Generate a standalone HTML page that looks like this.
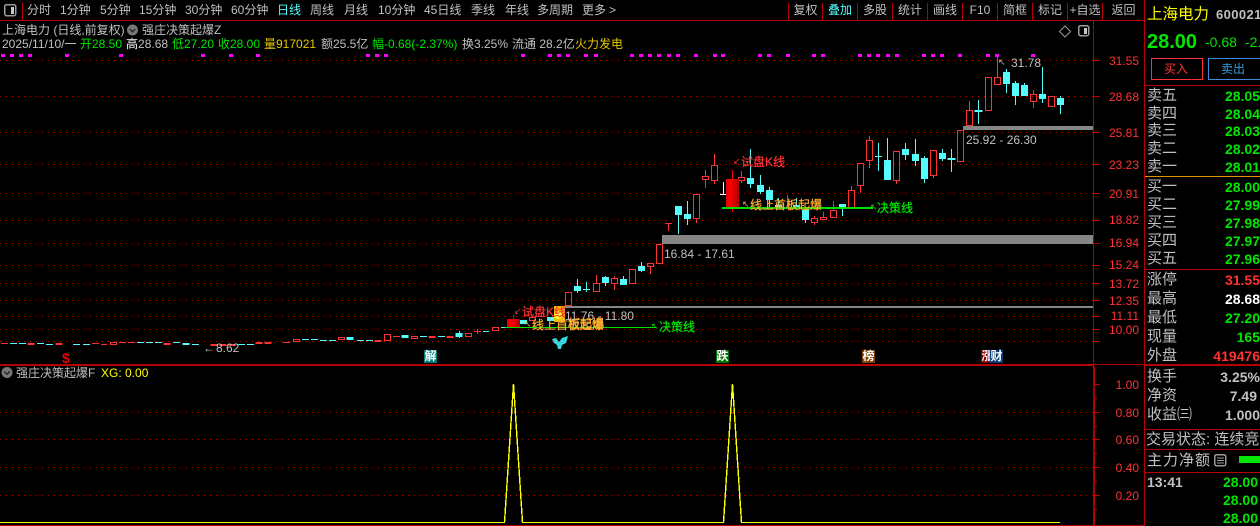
<!DOCTYPE html>
<html lang="zh"><head><meta charset="utf-8"><title>上海电力</title>
<style>
html,body{margin:0;padding:0;background:#000;width:1260px;height:526px;overflow:hidden}
body{position:relative;font-family:"Liberation Sans","WenQuanYi Zen Hei","Noto Sans CJK SC",sans-serif;font-size:12px;color:#c0c0c0}
span,div.t{position:absolute;white-space:nowrap;line-height:14px}
svg{position:absolute;left:0;top:0}
.tb{top:3px;font-size:12px}
.tc{top:3px;text-align:center}
.ax{left:1100px;width:39px;text-align:right;color:#ff3232;font-size:12px}
.lb{left:1147px;font-size:15px;line-height:18px}
.v{right:0;font-weight:bold;font-size:14px;line-height:16px;color:#00e600}
.ev{width:13px;height:13px;line-height:13px;color:#fff;text-align:center;font-size:12px;font-weight:bold;top:350px}
.g{color:#00e600}.y{color:#e6c800}.w{color:#fff}.c{color:#54fcfc}.r{color:#ff3232}.ye{color:#ffff00}.o{color:#ffb030}
.arr{font-size:9px;font-family:"DejaVu Sans",sans-serif}
.big{-webkit-text-stroke:.25px currentColor}
</style></head><body>
<svg width="1260" height="526" shape-rendering="crispEdges">
<defs><linearGradient id="rg" x1="0" x2="1" y1="0" y2="0"><stop offset="0" stop-color="#d80000"/><stop offset=".3" stop-color="#ff0000"/><stop offset="1" stop-color="#b00000"/></linearGradient></defs>
<!-- frame -->
<g stroke="#b40000" fill="none">
<path d="M0 20.5H1144M22.5 3V20M788.5 3V20M822.5 3V20M857.5 3V20M892.5 3V20M927.5 3V20M962.5 3V20M997.5 3V20M1032.5 3V20M1067.5 3V20M1102.5 3V20"/>
<path d="M0 364.5H1260M0 365.5H1093M1093.5 21V526M1094.5 366V526M0 525.5H1144M1144.5 0V526M1145 85.5H1260M1145 269.5H1260M1145 365.5H1260M1145 429.5H1260M1145 449.5H1260M1145 472.5H1260"/>
<path d="M1094 60.5h6M1094 96.5h6M1094 132.5h6M1094 164.5h6M1094 193.5h6M1094 220.5h6M1094 243.5h6M1094 265.5h6M1094 283.5h6M1094 300.5h6M1094 316.5h6M1094 329.5h6M1094 341.5h6M1094 384.5h6M1094 412.5h6M1094 439.5h6M1094 467.5h6M1094 495.5h6M1094 398.5h3M1094 426.5h3M1094 453.5h3M1094 481.5h3M1094 509.5h3"/>
</g>
<path d="M1145 176.5H1260" stroke="#e09000"/>
<!-- dotted grid -->
<g stroke="#c00000" stroke-dasharray="1 5" fill="none">
<path d="M0 60.5H1093M0 96.5H1093M0 132.5H1093M0 164.5H1093M0 193.5H1093M0 220.5H1093M0 243.5H1093M0 265.5H1093M0 283.5H1093M0 300.5H1093M0 316.5H1093M0 329.5H1093M0 341.5H1093M0 412.5H1093M0 439.5H1093M0 467.5H1093M0 495.5H1093"/>
</g>
<!-- magenta dots -->
<path fill="#ff00ff" d="M1 54h4v3h-4zM10 54h4v3h-4zM19 54h4v3h-4zM28 54h4v3h-4zM65 54h4v3h-4zM119 54h4v3h-4zM201 54h4v3h-4zM229 54h4v3h-4zM256 54h4v3h-4zM366 54h4v3h-4zM375 54h4v3h-4zM384 54h4v3h-4zM521 54h4v3h-4zM548 54h4v3h-4zM557 54h4v3h-4zM566 54h4v3h-4zM584 54h4v3h-4zM594 54h4v3h-4zM630 54h4v3h-4zM639 54h4v3h-4zM648 54h4v3h-4zM657 54h4v3h-4zM667 54h4v3h-4zM676 54h4v3h-4zM694 54h4v3h-4zM713 54h4v3h-4zM721 54h4v3h-4zM758 54h4v3h-4zM767 54h4v3h-4zM786 54h4v3h-4zM812 54h4v3h-4zM821 54h4v3h-4zM858 54h4v3h-4zM867 54h4v3h-4zM876 54h4v3h-4zM886 54h4v3h-4zM895 54h4v3h-4zM922 54h4v3h-4zM931 54h4v3h-4zM940 54h4v3h-4zM958 54h4v3h-4zM986 54h4v3h-4zM995 54h4v3h-4zM1031 54h4v3h-4z"/>
<!-- grey zones -->
<path fill="#868686" d="M963 126h130v4h-130zM662 235h431v9h-431zM565 306h528v2h-528z"/>
<!-- cyan candles -->
<path stroke="#54fcfc" fill="#54fcfc" d="M1057.5 98.5h6v6h-6zM1060.5 96V114M1039.5 94.5h6v4h-6zM1042.5 67V103M1021.5 85.5h6v10h-6zM1024.5 83V85M1012.5 83.5h6v12h-6zM1015.5 81V105M1003.5 72.5h6v11h-6zM1006.5 69V93M975 110.5h7v1h-7zM978.5 100V124M948 158.5h7v1h-7zM951.5 149V172M939.5 153.5h6v5h-6zM942.5 149V161M921.5 158.5h6v20h-6zM924.5 156V183M912.5 154.5h6v6h-6zM915.5 139V166M902.5 149.5h6v5h-6zM905.5 143V160M884.5 160.5h6v19h-6zM887.5 138V179M875 156.5h7M878.5 143V171M839.5 204.5h6v4h-6zM842.5 208V216M802.5 210.5h6v9h-6zM805.5 219V223M793.5 205.5h6v3h-6zM796.5 198V205M775.5 205.5h6v3h-6zM778.5 198V205M766.5 190.5h6v9h-6zM769.5 187V208M757.5 185.5h6v6h-6zM760.5 175V194M747.5 178.5h6v5h-6zM750.5 149V188M684.5 214.5h6v4h-6zM687.5 201V225M675.5 206.5h6v8h-6zM678.5 206V234M638.5 266.5h6v4h-6zM641.5 262V272M620.5 279.5h6v5h-6zM623.5 276V285M602.5 277.5h6v5h-6zM605.5 276V286M583 289.5h7M586.5 282V292M574.5 286.5h6v4h-6zM577.5 279V293M547.5 317.5h6v3h-6zM520.5 320.5h6v3h-6zM501 327.5h7M483 331.5h6M456 333.5h6v3h-6zM459.5 331V338M438 336.5h7M420 336.5h7M402 335.5h6v2h-6zM366 340.5h7M357 340.5h7M347 337.5h6v2h-6zM329 340.5h7M320 340.5h7M311 339.5h7M302 339.5h7M247 344.5h7M238 344.5h7M192 344.5h7M183 343.5h6v1h-6zM173 342.5h7M155 342.5h7M146 342.5h7M137 342.5h7M83 344.5h7M73 344.5h7M46 344.5h7M37 343.5h7M19 343.5h7M10 343.5h7"/>
<!-- red candles -->
<path stroke="#ff3232" fill="none" d="M1048.5 96.5h6v10h-6zM1030.5 94.5h6v7h-6zM1033.5 90V94M1033.5 102V108M994.5 77.5h6v7h-6zM997.5 57V77M985.5 77.5h6v33h-6zM966.5 110.5h6v15h-6zM969.5 101V110M957.5 130.5h6v31h-6zM930.5 150.5h6v25h-6zM933.5 176V178M893.5 151.5h6v29h-6zM896.5 181V184M866.5 140.5h6v20h-6zM869.5 136V140M869.5 161V168M857.5 163.5h6v22h-6zM860.5 186V193M848.5 190.5h6v18h-6zM851.5 186V190M830.5 210.5h6v7h-6zM833.5 201V210M820.5 217.5h6v2h-6zM823.5 212V217M811.5 218.5h6v4h-6zM814.5 216V218M814.5 223V225M787.5 195V208M738.5 177.5h6v3h-6zM741.5 171V177M741.5 181V183M711.5 165.5h6v15h-6zM714.5 154V165M714.5 181V184M702.5 176.5h6v3h-6zM705.5 170V176M705.5 180V188M693.5 194.5h6v24h-6zM696.5 219V223M665 223.5h7M668.5 224V231M656.5 244.5h6v19h-6zM647.5 263.5h6v3h-6zM650.5 267V274M629.5 269.5h6v14h-6zM611.5 278.5h6v5h-6zM614.5 276V278M614.5 284V290M593.5 283.5h6v8h-6zM596.5 275V283M565.5 292.5h6v13h-6zM529.5 317.5h6v3h-6zM492.5 327.5h6v3h-6zM474 331.5h7M477.5 329V334M465.5 333.5h6v3h-6zM447 336.5h6v1h-6zM429 336.5h6v1h-6zM411.5 336.5h6v2h-6zM393 336.5h7M384.5 334.5h6v6h-6zM375 340.5h6v1h-6zM338.5 337.5h6v2h-6zM293.5 339.5h6v2h-6zM283 342.5h7M265 342.5h6v1h-6zM256 342.5h6v1h-6zM229 344.5h6v1h-6zM220 344.5h6v1h-6zM211 344.5h6v1h-6zM164 343.5h6v1h-6zM128 342.5h7M119 342.5h7M110.5 342.5h6v2h-6zM101 344.5h6M92 343.5h7M56 343.5h6v1h-6zM28 343.5h6v1h-6zM1 343.5h7"/>
<!-- solid red -->
<rect x="726" y="179" width="13" height="29" fill="url(#rg)"/>
<rect x="507" y="319" width="13" height="8" fill="url(#rg)"/>
<path stroke="#ff0000" d="M732.5 170V179M732.5 208V212M513.5 315V319"/>
<path stroke="#fff" d="M723.5 182V195M720 194.5h6"/>
<!-- green lines -->
<path stroke="#00e000" d="M722 207.5H873M722 208.5H873M505 327.5H656"/>
<!-- yellow blob -->
<path fill="#f0c000" d="M554 306h11v16h-11z"/><circle cx="558" cy="315" r="4" fill="#ffff30"/>
<!-- butterfly -->
<path fill="#35d8e0" shape-rendering="auto" d="M552 339L556 338L559 342L562 338L568 336L566 343L562 345L561 349L558 349L557 345L554 343Z"/>
<!-- lower lines -->
<path stroke="#ffff00" fill="none" stroke-width="1.4" d="M0 522.5H504.5L513.5 384L522.5 522.5H723.5L732.5 384L741.5 522.5H1060"/>
<!-- icons -->
<g fill="none" stroke="#9a9a9a" stroke-width="1.5">
<rect x="4.7" y="4.7" width="11" height="11" rx="2"/>
<rect x="1078.7" y="25.7" width="10" height="10" rx="2"/>
<path d="M1065 26l5.5 5.5-5.5 5.5-5.5-5.5z" shape-rendering="auto" stroke-width="1"/>
<rect x="1214.7" y="454.7" width="11" height="11" rx="2"/>
<path d="M1217 458h7M1217 460.500h7M1217 463h7" stroke-width="1"/>
</g>
<path fill="#c8c8c8" d="M11 7h3v7h-3zM1084 28h3v6h-3z"/>
<circle cx="132.500" cy="30" r="5.500" fill="#777" shape-rendering="auto"/><path d="M129.800 29l2.700 2.800 2.700-2.800" stroke="#222" stroke-width="1.300" fill="none" shape-rendering="auto"/>
<circle cx="7" cy="372.500" r="5.500" fill="#777" shape-rendering="auto"/><path d="M4.300 371.500l2.700 2.800 2.700-2.800" stroke="#222" stroke-width="1.300" fill="none" shape-rendering="auto"/>
<!-- buttons & bar -->
<rect x="1151.500" y="58.500" width="51" height="21" fill="none" stroke="#ff3232"/>
<rect x="1208.500" y="58.500" width="52" height="21" fill="none" stroke="#3c8cdc"/>
<rect x="1239" y="456" width="21" height="7" fill="#00e600"/>
</svg>

<span class="tb" style="left:27px">分时</span><span class="tb" style="left:60px">1分钟</span><span class="tb" style="left:100px">5分钟</span><span class="tb" style="left:139px">15分钟</span><span class="tb" style="left:185px">30分钟</span><span class="tb" style="left:231px">60分钟</span><span class="tb c" style="left:277px">日线</span><span class="tb" style="left:310px">周线</span><span class="tb" style="left:344px">月线</span><span class="tb" style="left:378px">10分钟</span><span class="tb" style="left:424px">45日线</span><span class="tb" style="left:471px">季线</span><span class="tb" style="left:505px">年线</span><span class="tb" style="left:537px">多周期</span><span class="tb" style="left:582px">更多</span><span class="tb" style="left:609px">&gt;</span>
<span class="tc" style="left:789px;width:33px">复权</span><span class="tc c" style="left:823px;width:34px">叠加</span><span class="tc" style="left:858px;width:34px">多股</span><span class="tc" style="left:893px;width:34px">统计</span><span class="tc" style="left:928px;width:34px">画线</span><span class="tc" style="left:963px;width:34px">F10</span><span class="tc" style="left:998px;width:34px">简框</span><span class="tc" style="left:1033px;width:34px">标记</span><span class="tc" style="left:1068px;width:34px">+自选</span><span class="tc" style="left:1103px;width:41px">返回</span>

<span style="left:2px;top:23px">上海电力 (日线,前复权)</span><span style="left:142px;top:23px">强庄决策起爆Z</span>
<span style="left:2px;top:37px">2025/11/10/一</span><span class="g" style="left:80px;top:37px">开28.50</span><span class="w" style="left:126px;top:37px">高<span style="position:static;color:#c0c0c0">28.68</span></span><span class="g" style="left:172px;top:37px">低27.20</span><span class="g" style="left:218px;top:37px">收28.00</span><span class="y" style="left:264px;top:37px">量917021</span><span style="left:321px;top:37px">额25.5亿</span><span class="g" style="left:372px;top:37px">幅-0.68(-2.37%)</span><span style="left:462px;top:37px">换3.25%</span><span style="left:512px;top:37px">流通 28.2亿</span><span class="y" style="left:575px;top:37px">火力发电</span>

<span class="ax" style="top:54px">31.55</span><span class="ax" style="top:90px">28.68</span><span class="ax" style="top:126px">25.81</span><span class="ax" style="top:158px">23.23</span><span class="ax" style="top:187px">20.91</span><span class="ax" style="top:213px">18.82</span><span class="ax" style="top:236px">16.94</span><span class="ax" style="top:258px">15.24</span><span class="ax" style="top:277px">13.72</span><span class="ax" style="top:294px">12.35</span><span class="ax" style="top:309px">11.11</span><span class="ax" style="top:323px">10.00</span>
<span class="ax" style="top:378px">1.00</span><span class="ax" style="top:406px">0.80</span><span class="ax" style="top:433px">0.60</span><span class="ax" style="top:461px">0.40</span><span class="ax" style="top:489px">0.20</span>

<span class="arr" style="left:998px;top:56px">↖</span><span style="left:1011px;top:56px">31.78</span>
<span style="left:966px;top:133px">25.92 - 26.30</span>
<span style="left:664px;top:247px">16.84 - 17.61</span>
<span style="left:565px;top:309px">11.76 - 11.80</span>
<span style="left:203px;top:341px">←</span><span style="left:216px;top:341px">8.62</span>
<span class="arr r" style="left:733px;top:155px">↙</span><span class="r big" style="left:741px;top:155px">试盘K线</span>
<span class="arr o" style="left:742px;top:198px">↖</span><span class="o big" style="left:750px;top:198px">线上首板起爆</span>
<span class="arr g" style="left:870px;top:201px">↖</span><span class="g big" style="left:877px;top:201px">决策线</span>
<span class="arr r" style="left:514px;top:305px">↙</span><span class="r big" style="left:522px;top:305px">试盘K线</span>
<span class="arr o" style="left:524px;top:318px">↖</span><span class="o big" style="left:532px;top:318px">线上首板起爆</span>
<span class="o big" style="left:568px;top:317px">板起爆</span>
<span class="arr g" style="left:651px;top:320px">↖</span><span class="g big" style="left:659px;top:320px">决策线</span>

<span style="left:62px;top:351px;font-weight:bold;font-size:14px;color:#f00000">$</span>
<span class="ev" style="left:424px;background:#007878">解</span>
<span class="ev" style="left:716px;background:#006e00">跌</span>
<span class="ev" style="left:862px;background:#804000">榜</span>
<span class="ev" style="left:981px;background:#800000">涨</span>
<span class="ev" style="left:990px;background:#0a3c78">财</span>

<span style="left:16px;top:366px">强庄决策起爆F</span><span class="ye" style="left:101px;top:366px">XG: 0.00</span>

<span class="ye" style="left:1147px;top:6px;font-size:15.500px;line-height:18px">上海电力</span>
<span style="left:1216px;top:8px;font-size:13px;font-weight:bold;letter-spacing:.4px">600021</span>
<span class="g" style="left:1147px;top:30px;font-size:20px;font-weight:bold;line-height:24px">28.00</span>
<span class="g" style="left:1205px;top:35px;font-size:14px">-0.68</span><span class="g" style="left:1245px;top:35px;font-size:14px">-2.37%</span>
<span class="r" style="left:1164px;top:62px">买入</span><span style="left:1221px;top:62px;color:#3c9ce0">卖出</span>

<span class="lb" style="top:87px">卖五</span><span class="lb" style="top:105px">卖四</span><span class="lb" style="top:122px">卖三</span><span class="lb" style="top:140px">卖二</span><span class="lb" style="top:158px">卖一</span>
<span class="lb" style="top:178px">买一</span><span class="lb" style="top:196px">买二</span><span class="lb" style="top:214px">买三</span><span class="lb" style="top:232px">买四</span><span class="lb" style="top:250px">买五</span>
<span class="lb" style="top:271px">涨停</span><span class="lb" style="top:290px">最高</span><span class="lb" style="top:309px">最低</span><span class="lb" style="top:328px">现量</span><span class="lb" style="top:347px">外盘</span>
<span class="lb" style="top:368px">换手</span><span class="lb" style="top:387px">净资</span><span class="lb" style="top:406px">收益㈢</span>
<span class="lb" style="left:1146px;top:431px">交易状态: 连续竞价</span>
<span class="lb" style="top:452px;letter-spacing:1px">主力净额</span>

<span class="v" style="top:88px">28.05</span><span class="v" style="top:106px">28.04</span><span class="v" style="top:123px">28.03</span><span class="v" style="top:141px">28.02</span><span class="v" style="top:159px">28.01</span>
<span class="v" style="top:179px">28.00</span><span class="v" style="top:197px">27.99</span><span class="v" style="top:215px">27.98</span><span class="v" style="top:233px">27.97</span><span class="v" style="top:251px">27.96</span>
<span class="v r" style="top:272px">31.55</span><span class="v w" style="top:291px">28.68</span><span class="v" style="top:310px">27.20</span><span class="v" style="top:329px">165</span><span class="v r" style="top:348px">419476</span>
<span class="v" style="top:369px;color:#c0c0c0">3.25%</span><span class="v" style="top:388px;right:3px;color:#c0c0c0">7.49</span><span class="v" style="top:407px;color:#c0c0c0">1.000</span>
<span style="left:1147px;top:474px;font-weight:bold;font-size:14px;line-height:16px;color:#c0c0c0">13:41</span>
<span class="v" style="top:474px;right:2px">28.00</span><span class="v" style="top:492px;right:2px">28.00</span><span class="v" style="top:510px;right:2px">28.00</span>
</body></html>
